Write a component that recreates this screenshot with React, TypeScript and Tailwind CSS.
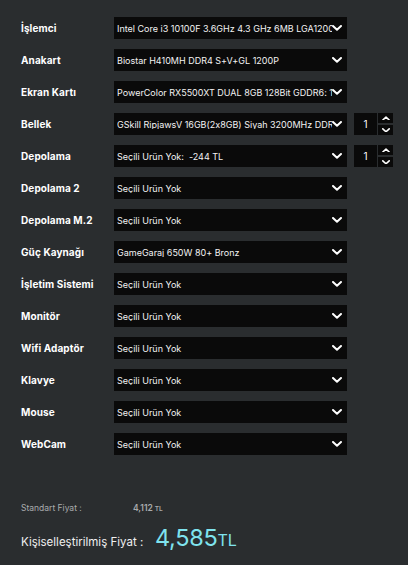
import React from "react";

const rows: { label: string; value: string; qty?: boolean }[] = [
  { label: "İşlemci", value: "Intel Core i3 10100F 3.6GHz 4.3 GHz 6MB LGA1200 Fan" },
  { label: "Anakart", value: "Biostar H410MH DDR4 S+V+GL 1200P" },
  { label: "Ekran Kartı", value: "PowerColor RX5500XT DUAL 8GB 128Bit GDDR6: 1.200 TL" },
  { label: "Bellek", value: "GSkill RipjawsV 16GB(2x8GB) Siyah 3200MHz DDR4", qty: true },
  { label: "Depolama", value: "Seçili Ürün Yok:  -244 TL", qty: true },
  { label: "Depolama 2", value: "Seçili Ürün Yok" },
  { label: "Depolama M.2", value: "Seçili Ürün Yok" },
  { label: "Güç Kaynağı", value: "GameGaraj 650W 80+ Bronz" },
  { label: "İşletim Sistemi", value: "Seçili Ürün Yok" },
  { label: "Monitör", value: "Seçili Ürün Yok" },
  { label: "Wifi Adaptör", value: "Seçili Ürün Yok" },
  { label: "Klavye", value: "Seçili Ürün Yok" },
  { label: "Mouse", value: "Seçili Ürün Yok" },
  { label: "WebCam", value: "Seçili Ürün Yok" },
];

function Chevron({ up = false, size = 10 }: { up?: boolean; size?: number }) {
  return (
    <svg width={size} height={size * 0.6} viewBox="0 0 10 6" className="shrink-0">
      <path
        d={up ? "M1 5 L5 1.3 L9 5" : "M1 1 L5 4.7 L9 1"}
        fill="none"
        stroke="#ffffff"
        strokeWidth="2"
        strokeLinecap="round"
        strokeLinejoin="round"
      />
    </svg>
  );
}

export default function App() {
  return (
    <div
      className="w-[408px] h-[565px] bg-[#2a2d2f] text-white overflow-hidden [font-feature-settings:'calt'_0]"
      style={{ fontFamily: "Inter, 'Noto Sans', sans-serif" }}
    >
      <div className="pt-[17px] flex flex-col gap-[10px]">
        {rows.map((r) => (
          <div key={r.label} className="flex items-center h-[22px]">
            <div className="w-[114px] pl-[21px] text-[10px] font-bold tracking-[0.1px] text-white">
              {r.label}
            </div>
            <div className="w-[233px] h-[22px] bg-[#0a0a0a] flex items-center pl-[3px] pr-[5px]">
              <span className="flex-1 overflow-hidden whitespace-pre text-[9px] text-[#f2f2f2] leading-none">
                {r.value}
              </span>
              <Chevron />
            </div>
            {r.qty && (
              <div className="flex items-center ml-[7px] h-[22px]">
                <div className="w-[23px] h-[22px] bg-[#0a0a0a] flex items-center justify-center text-[10px] text-white">
                  1
                </div>
                <div className="ml-[1px] flex flex-col justify-between h-[22px] w-[15px]">
                  <div className="h-[10px] bg-[#0a0a0a] flex items-center justify-center">
                    <Chevron up size={8} />
                  </div>
                  <div className="h-[10px] bg-[#0a0a0a] flex items-center justify-center">
                    <Chevron size={8} />
                  </div>
                </div>
              </div>
            )}
          </div>
        ))}
      </div>

      <div className="mt-[47px] pl-[21px]">
        <div className="flex items-baseline h-[14px]">
          <span className="w-[112px] text-[8.5px] text-[#a9abad]">Standart Fiyat :</span>
          <span className="text-[8.5px] font-semibold text-[#a9abad]">4,112</span>
          <span className="ml-[2px] text-[6.5px] font-semibold text-[#a9abad]">TL</span>
        </div>
        <div className="flex items-baseline mt-[10px]">
          <span className="w-[134px] text-[11.5px] text-[#f0f0f0]">Kişiselleştirilmiş Fiyat :</span>
          <span className="text-[23.5px] leading-none text-[#7fe3ee] tracking-[-0.3px]">4,585</span>
          <span className="text-[16px] leading-none text-[#7fe3ee]">TL</span>
        </div>
      </div>
    </div>
  );
}
